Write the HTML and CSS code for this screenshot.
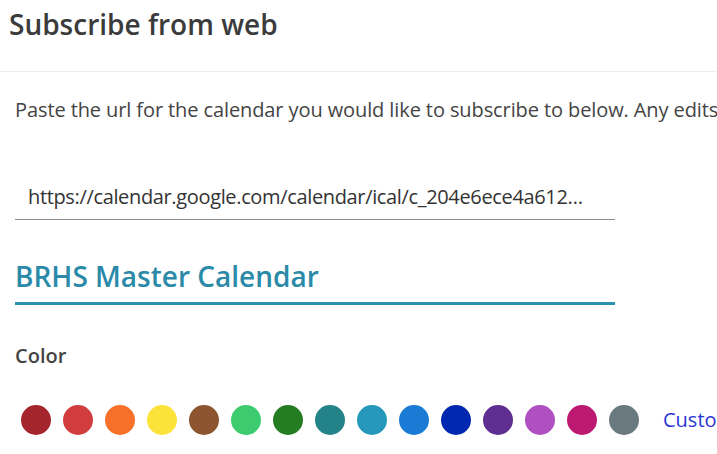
FILE: index.html
```html
<!DOCTYPE html>
<html lang="en">
<head>
    <meta charset="UTF-8">
    <title>Subscribe from web</title>
    <link rel="stylesheet" href="styles.css">
</head>
<body>
    <div class="dialog-header">
        <h1>Subscribe from web</h1>
    </div>
    <div class="dialog-body">
        <p class="intro">Paste the url for the calendar you would like to subscribe to below. Any edits made to the calendar will be reflected here.</p>

        <!-- URL field -->
        <div class="url-field">
            <span class="url-text">https://calendar.google.com/calendar/ical/c_204e6ece4a6124b3f9cd0e1a7b@group.calendar.google.com/public/basic.ics</span>
        </div>

        <!-- Name field -->
        <div class="name-field">BRHS Master Calendar</div>

        <div class="label">Color</div>
        <div class="swatches">
            <span class="swatch" style="background:#a4262c"></span>
            <span class="swatch" style="background:#d13d3f"></span>
            <span class="swatch" style="background:#f7702a"></span>
            <span class="swatch" style="background:#fce33a"></span>
            <span class="swatch" style="background:#8c5530"></span>
            <span class="swatch" style="background:#3ccb6e"></span>
            <span class="swatch" style="background:#257d22"></span>
            <span class="swatch" style="background:#238388"></span>
            <span class="swatch" style="background:#2598bc"></span>
            <span class="swatch" style="background:#1a7ad4"></span>
            <span class="swatch" style="background:#0029b0"></span>
            <span class="swatch" style="background:#5e2e91"></span>
            <span class="swatch" style="background:#b04fc1"></span>
            <span class="swatch" style="background:#bc1a70"></span>
            <span class="swatch" style="background:#69797e"></span>
            <a class="custom" href="#">Custom</a>
        </div>
    </div>
</body>
</html>
```

FILE: styles.css
```css
html, body {
    margin: 0;
    background: #fff;
    overflow: hidden;
}
body {
    width: 717px;
    height: 454px;
    font-family: "Open Sans", "Noto Sans", sans-serif;
    color: #3b3b3b;
}
.dialog-header {
    height: 72px;
    border-bottom: 1px solid #ededed;
    padding-left: 9px;
    box-sizing: border-box;
}
.dialog-header h1 {
    margin: 0;
    padding-top: 5px;
    font-size: 28px;
    font-weight: 600;
    color: #3b3b3b;
    line-height: 38px;
}
.dialog-body {
    padding: 0 0 0 15px;
}
.intro {
    margin: 24px 0 0;
    font-size: 20px;
    line-height: 28px;
    white-space: nowrap;
    letter-spacing: -0.1px;
    color: #444;
}
.url-field {
    width: 600px;
    margin-top: 59px;
    padding: 0 13px 8px;
    box-sizing: border-box;
    border-bottom: 1px solid #8a8a8a;
    font-size: 20px;
    line-height: 28px;
    color: #333;
}
.url-text {
    display: block;
    width: 562px;
    overflow: hidden;
    text-overflow: ellipsis;
    white-space: nowrap;
    letter-spacing: -0.35px;
}
.name-field {
    width: 600px;
    margin-top: 37px;
    padding-bottom: 7px;
    border-bottom: 3px solid #2b91ad;
    font-size: 28px;
    font-weight: 600;
    line-height: 38px;
    color: #2a8aa8;
}
.label {
    margin-top: 37px;
    font-size: 20px;
    font-weight: 600;
    line-height: 28px;
    color: #444;
}
.swatches {
    display: flex;
    align-items: center;
    gap: 12px;
    height: 30px;
    margin-top: 35px;
    padding-left: 6px;
    white-space: nowrap;
}
.swatch {
    flex: none;
    width: 30px;
    height: 30px;
    border-radius: 50%;
}
.custom {
    margin-left: 12px;
    font-size: 20px;
    line-height: 28px;
    color: #2b35d6;
    text-decoration: none;
}
```
